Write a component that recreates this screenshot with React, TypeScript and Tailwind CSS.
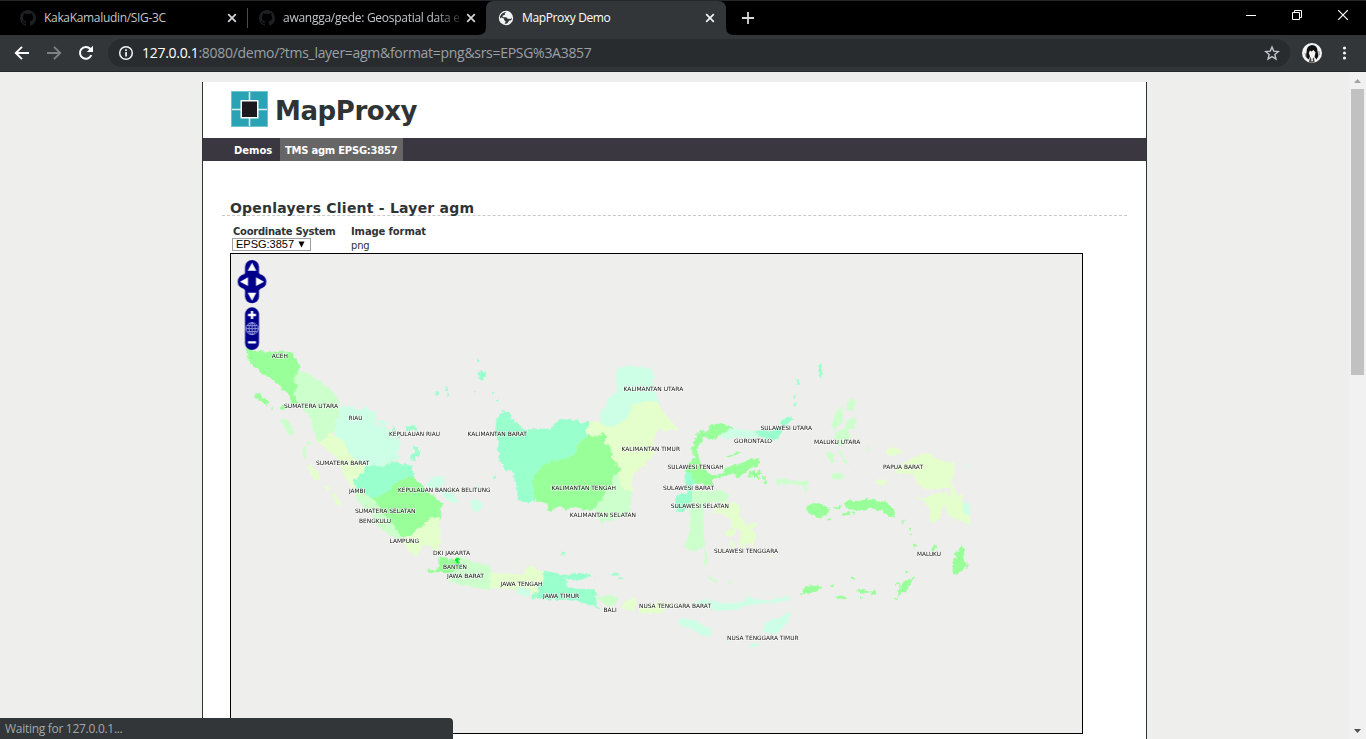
import React from "react";

const G = "#99ff99";
const PG = "#ccffcc";
const A = "#99ffcc";
const PA = "#ccffe5";
const Y = "#e5ffcc";

type Shape = [string, string];
type Region = { x: number; y: number; shapes: Shape[] };

const regions: Region[] = [
  {
    x: 230,
    y: 340,
    shapes: [
      [PG, "M205,92 L240,103 L275,130 L305,150 L325,180 L330,225 L315,240 L318,275 L300,278 L285,298 L262,305 L250,270 L243,235 L225,215 L200,185 L190,165 L200,140 L190,118Z"],
      [G, "M48,25 L80,32 L120,38 L150,33 L180,38 L195,50 L200,68 L213,78 L205,88 L190,118 L200,140 L190,165 L205,185 L186,190 L178,165 L155,145 L130,118 L110,110 L75,82 L55,60Z"],
      [PA, "M335,198 L350,205 L360,196 L380,210 L410,203 L420,222 L440,240 L430,252 L470,265 L478,285 L495,295 L513,315 L500,340 L510,355 L485,365 L460,382 L435,375 L408,378 L380,360 L350,335 L345,310 L318,290 L315,245 L330,225Z"],
      [PA, "M415,212 L440,215 L442,235 L425,225Z M445,240 L470,245 L473,258 L450,255Z M476,270 L500,275 L505,292 L485,288Z"],
      [Y, "M262,305 L285,298 L300,278 L318,290 L345,310 L350,335 L380,360 L408,378 L405,400 L372,415 L370,445 L350,415 L335,385 L320,350 L300,335Z"],
      [A, "M408,378 L435,375 L460,382 L485,365 L520,372 L548,380 L550,412 L500,427 L480,452 L450,470 L420,472 L385,455 L370,425 L385,408 L405,400Z"],
      [PG, "M372,445 L385,455 L420,470 L450,500 L465,530 L490,555 L517,586 L512,598 L480,585 L440,555 L425,520 L400,500 L380,470Z"],
      [G, "M550,410 L575,435 L590,455 L610,468 L640,490 L630,515 L635,540 L600,545 L570,562 L547,580 L540,592 L515,590 L490,555 L465,530 L450,500 L425,475 L450,468 L480,450 L500,425Z"],
      [Y, "M555,570 L580,558 L600,535 L628,534 L631,610 L625,636 L600,620 L576,615 L560,648 L535,630 L515,602 L545,587Z"],
      [G, "M73,162 L85,160 L115,186 L110,194 L80,174Z M121,205 h6 v4 h-6Z M150,200 l14,-4 l4,8 l-12,6Z M180,185 l22,-4 l2,8 l-20,4Z"],
      [PG, "M152,240 L165,236 L185,260 L193,278 L188,290 L175,278 L160,258Z M218,322 l8,-2 l2,32 l-8,-6Z M230,312 l12,-4 l-3,8Z"],
      [Y, "M235,375 L248,378 L262,398 L270,418 L258,421 L243,402 L233,388Z M282,436 l14,6 l3,12 l-12,-6Z M307,457 L320,468 L336,503 L325,494 L310,474Z"],
      [A, "M528,262 l18,-7 l14,6 l2,12 l-14,-3 l-16,3Z M553,318 l8,3 l-2,12 l16,3 l-6,10 l-10,0 l-4,14 l-14,-3 l2,-12 l10,-6Z M617,155 h9 v10 h-9Z M646,138 h6 v8 h-6Z M643,148 h8 v4 h-8Z M505,290 h7 v5 h-7Z M490,257 l6,14 l-6,-2Z M652,160 h4 v8 h-4Z"],
      [PA, "M588,432 L608,412 L640,410 L642,430 L628,448 L610,446Z M630,452 L660,450 L678,472 L668,486 L645,475Z M668,480 l16,2 v6 h-16Z M735,440 l15,2 l-8,10Z"],
      [PA, "M719,484 L735,480 L760,490 L758,505 L745,517 L730,510Z"],
    ],
  },
  {
    x: 400,
    y: 520,
    shapes: [
      [PG, "M173,112 L200,118 L230,128 L260,134 L275,155 L268,178 L272,205 L265,211 L230,203 L190,195 L150,185 L148,165 L175,145Z"],
      [G, "M120,110 L140,115 L165,120 L180,130 L200,140 L165,150 L150,160 L125,155 L100,158 L88,158 L80,148 L100,152 L115,140Z"],
      ["#00ef25", "M163,117 L180,118 L177,128 L168,130Z"],
      [Y, "M272,155 L310,160 L340,160 L370,165 L380,140 L400,137 L408,152 L432,150 L430,185 L412,195 L408,225 L385,215 L350,212 L310,205 L272,205Z"],
      [PA, "M352,202 L385,204 L390,230 L370,226 L350,215Z"],
      [A, "M432,153 L462,158 L478,162 L498,165 L500,200 L530,208 L585,205 L588,250 L597,264 L570,255 L535,243 L500,240 L450,238 L395,234 L400,220 L415,215 L413,195 L430,185Z M495,166 L520,160 L565,162 L570,170 L540,180 L505,178Z M485,98 l8,-2 l2,8 l-8,2Z M630,161 l18,-3 l8,8 l-14,0Z M656,172 l12,2 v5 l-12,-3Z M584,170 h4 v4 h-4Z"],
      [PG, "M588,233 L615,230 L640,226 L656,238 L640,256 L620,260 L608,243Z"],
      [Y, "M665,262 L682,240 L705,235 L712,245 L698,272 L680,266Z M714,278 L724,260 L740,262 L758,248 L775,248 L795,245 L820,256 L832,250 L838,258 L800,262 L790,275 L755,280Z"],
    ],
  },
  {
    x: 460,
    y: 350,
    shapes: [
      [PA, "M475,54 L500,50 L540,52 L572,58 L580,72 L578,110 L590,140 L598,160 L560,152 L520,165 L500,205 L465,230 L420,225 L425,185 L450,145 L475,120 L470,90Z"],
      [A, "M132,182 L145,190 L155,208 L178,228 L195,243 L230,237 L270,237 L300,208 L330,210 L355,213 L362,222 L390,212 L395,225 L380,235 L382,255 L350,285 L350,308 L320,328 L280,332 L250,350 L220,375 L225,450 L205,458 L175,450 L170,400 L155,358 L118,330 L115,270 L106,250 L110,205Z M125,332 l18,6 l8,20 l-15,6 l-5,-15Z M100,377 h9 v8 h-9Z M55,70 L65,62 L75,70 L72,88 L62,92Z M97,127 h8 v6 h-8Z M108,150 h7 v4 h-7Z M53,30 h4 v4 h-4Z M42,125 h4 v4 h-4Z"],
      [Y, "M382,235 L392,213 L410,212 L430,225 L465,230 L500,205 L520,165 L560,152 L590,158 L605,180 L625,205 L655,240 L590,240 L580,275 L583,310 L550,350 L520,370 L512,400 L522,425 L480,420 L478,370 L460,335 L455,300 L435,292 L440,260 L415,258 L400,262 L382,250Z"],
      [G, "M352,285 L382,256 L400,262 L415,258 L430,250 L440,260 L430,282 L450,290 L458,330 L480,355 L475,372 L458,378 L460,405 L440,420 L415,470 L385,482 L345,470 L320,478 L300,468 L268,487 L262,460 L230,452 L220,430 L218,378 L250,350 L280,332 L320,328 L350,308Z"],
      [PG, "M458,378 L475,372 L480,400 L490,420 L517,425 L512,455 L508,490 L480,500 L425,520 L405,480 L430,440 L460,405Z"],
    ],
  },
  {
    x: 660,
    y: 350,
    shapes: [
      [G, "M155,222 L190,222 L222,235 L210,243 L180,252 L170,268 L135,262 L120,275 L110,300 L118,330 L125,350 L140,365 L160,378 L190,370 L195,355 L225,345 L250,338 L275,325 L298,330 L297,345 L270,355 L240,380 L215,372 L190,378 L160,385 L155,405 L130,402 L100,400 L80,362 L95,330 L105,320 L92,295 L103,285 L110,250 L130,240 L135,252 L148,238Z"],
      [G, "M200,320 l15,-5 l3,4 l-14,5Z M220,310 l15,-4 l6,3 l-16,6Z M265,370 l15,-8 l8,8 l10,-8 l8,10 l-14,4 l12,10 l-10,0 l-16,-12 l-12,6Z M310,380 h6 v8 h-6Z M312,395 h8 v6 h-8Z"],
      [PA, "M180,252 L215,238 L260,240 L290,245 L300,260 L270,265 L230,262 L195,266Z"],
      [A, "M285,245 L310,240 L330,245 L352,235 L370,225 L360,220 L375,205 L390,198 L397,208 L375,230 L362,245 L355,265 L330,270 L305,262Z M477,44 L487,46 L485,62 L488,72 L480,84 L476,70Z M408,88 L415,90 L419,103 L411,104Z M404,137 h5 v8 h-5Z M404,158 h5 v7 h-5Z"],
      [A, "M78,362 L92,372 L104,395 L95,410 L98,445 L85,470 L72,485 L50,485 L50,470 L45,445 L65,430 L82,430 L72,395Z"],
      [PG, "M98,420 L150,425 L180,420 L208,435 L200,455 L160,455 L130,470 L130,520 L132,590 L115,598 L100,605 L75,592 L88,550 L92,500 L85,470 L98,445Z M134,600 L140,615 L138,648 L134,640Z M143,678 l12,5 l18,10 l-4,4 l-20,-8Z"],
      [Y, "M165,465 L195,452 L235,462 L240,480 L235,500 L255,515 L262,530 L283,513 L290,525 L272,540 L288,550 L284,575 L274,592 L262,575 L250,597 L238,582 L243,545 L228,535 L225,557 L200,557 L192,545 L220,540 L208,500 L185,490 L160,490Z M208,572 l12,5 v14 l-10,-4Z M328,615 h5 v5 h-5Z"],
      [PG, "M560,160 L575,146 L587,155 L578,180 L562,175Z M548,172 L545,185 L548,210 L535,230 L522,240 L515,218 L528,188Z M560,212 L587,205 L585,235 L560,240 L575,262 L560,270 L545,290 L535,285 L525,262 L528,250 L555,235Z M500,305 L520,310 L525,335 L515,338 L502,325Z M535,298 L545,310 L555,330 L565,345 L550,335Z M517,368 L540,370 L555,380 L545,388 L518,386Z"],
      [PG, "M350,386 L380,388 L400,395 L445,392 L452,400 L435,405 L441,420 L436,426 L430,405 L380,400 L350,403Z"],
      [G, "M440,468 L460,460 L485,462 L506,475 L506,490 L480,502 L455,495 L440,480Z M555,460 L570,450 L595,455 L620,448 L640,450 L680,458 L700,480 L702,502 L685,495 L660,480 L635,475 L600,480 L565,477Z M545,490 l20,-5 l8,8 l-24,4Z M520,475 l22,-8 l6,4 l-20,8Z M575,485 l12,3 l-4,6Z M502,508 h9 v5 h-9Z"],
      [G, "M430,718 L445,710 L475,708 L485,715 L460,728 L420,731 L428,725Z M576,682 h8 v6 h-8Z M512,706 h5 v4 h-5Z M591,722 l14,-3 l22,6 l-4,4 l-24,-3Z"],
      [Y, "M675,300 l25,-7 l18,3 l-3,16 l-18,3Z M645,395 L665,387 L678,398 L660,405Z"],
      [PG, "M621,292 l10,6 l-3,3Z"],
    ],
  },
  {
    x: 860,
    y: 430,
    shapes: [
      [Y, "M72,60 L95,62 L105,55 L125,65 L115,75 L80,75Z M140,97 L160,82 L195,72 L225,80 L245,95 L278,97 L285,130 L272,160 L290,190 L310,220 L315,245 L330,255 L328,285 L310,270 L285,268 L262,252 L258,215 L275,185 L265,172 L225,178 L190,174 L172,160 L160,130 L130,130 L105,132 L110,110Z M168,202 L200,205 L215,192 L240,190 L262,185 L262,215 L245,230 L242,260 L225,276 L208,270 L212,238 L190,212Z M45,155 l15,-8 l18,6 l-5,11 l-18,-2Z M302,190 l5,5 l-2,14 l-4,-8Z"],
      [PA, "M312,213 L324,222 L329,245 L328,255 L310,248Z M318,107 l8,0 l-2,8Z M325,283 l5,-5 v12Z"],
      [G, "M305,347 L313,360 L310,385 L318,402 L308,420 L290,430 L278,428 L280,395 L288,380 L283,367 L298,365Z M320,400 l5,3 l-4,14Z M222,345 L229,343 L226,360 L215,362Z M103,508 L120,495 L112,485 L130,455 L150,450 L163,440 L160,450 L148,460 L140,480 L120,492 L108,507Z M105,463 l16,-4 l-2,6Z M30,486 L45,482 L48,490 L35,494Z M124,272 l9,0 l-4,9Z M145,297 h5 v4 h-5Z M149,312 h5 v4 h-5Z M163,345 h4 v4 h-4Z M137,423 h6 v5 h-6Z M0,501 h5 v4 h-5Z"],
    ],
  },
  {
    x: 610,
    y: 550,
    shapes: [
      [PA, "M250,158 L290,148 L320,155 L345,162 L385,160 L405,150 L415,138 L425,150 L455,148 L475,155 L495,146 L540,140 L543,150 L515,155 L480,158 L450,160 L415,165 L370,178 L320,182 L290,168 L255,165Z M205,212 L225,205 L260,212 L278,228 L303,238 L305,252 L285,259 L262,245 L240,232 L210,225Z M465,220 L490,208 L510,205 L530,188 L545,187 L535,215 L505,245 L490,250 L462,245Z M415,292 L435,278 L455,275 L430,292Z M345,272 h8 v4 h-8Z"],
      [PG, "M287,10 l4,8 l-1,30 l-4,-8Z M294,78 l10,3 l12,10 l-8,2Z M356,96 h7 v4 h-7Z"],
      [G, "M675,140 l18,-3 l18,7 l-2,4 l-18,-3Z"],
    ],
  },
];

const labels: [string, number, number, number][] = [
  ["ACEH", 271.7, 288, 356.5],
  ["SUMATERA UTARA", 284, 338, 406],
  ["RIAU", 348.5, 362.5, 418],
  ["KEPULAUAN RIAU", 389, 440, 434],
  ["SUMATERA BARAT", 316, 369.5, 463],
  ["JAMBI", 349, 365.3, 491.5],
  ["KEPULAUAN BANGKA BELITUNG", 398, 490.5, 490.3],
  ["SUMATERA SELATAN", 355, 415.5, 511.5],
  ["BENGKULU", 359, 391, 521.5],
  ["LAMPUNG", 389.5, 419, 541.5],
  ["DKI JAKARTA", 433, 470, 553],
  ["BANTEN", 443, 467, 567],
  ["JAWA BARAT", 447, 484, 576],
  ["JAWA TENGAH", 500.5, 542.5, 584],
  ["JAWA TIMUR", 543, 579.3, 596],
  ["BALI", 603.5, 616.7, 610],
  ["NUSA TENGGARA BARAT", 639, 711, 606],
  ["NUSA TENGGARA TIMUR", 727, 798.5, 638.5],
  ["KALIMANTAN UTARA", 623.5, 683.3, 389.5],
  ["KALIMANTAN BARAT", 467.5, 527, 434.5],
  ["KALIMANTAN TIMUR", 621.5, 680, 449.5],
  ["KALIMANTAN TENGAH", 551.5, 616, 488.5],
  ["KALIMANTAN SELATAN", 569.7, 636, 515.3],
  ["SULAWESI TENGAH", 667.5, 723.5, 467.5],
  ["SULAWESI BARAT", 663, 714, 488.5],
  ["SULAWESI SELATAN", 670.7, 729, 506],
  ["SULAWESI UTARA", 760.5, 812, 428.5],
  ["GORONTALO", 734, 772, 441],
  ["MALUKU UTARA", 814, 860.3, 442],
  ["SULAWESI TENGGARA", 714, 778, 550.7],
  ["PAPUA BARAT", 883, 923, 467.5],
  ["MALUKU", 917, 941, 554],
];

function PanZoom() {
  return (
    <g transform="translate(225 225) scale(0.33333)">
      <rect x="60" y="105" width="42" height="130" rx="21" fill="#00008b" />
      <rect x="38" y="148" width="86" height="44" rx="22" fill="#00008b" />
      <rect x="56" y="144" width="50" height="52" rx="8" fill="#00008b" />
      <path d="M81 113 L94 137 H68Z M81 227 L94 203 H68Z M45 170 L69 157 V183Z M117 170 L93 157 V183Z" fill="#fff" />
      <rect x="60" y="247" width="42" height="128" rx="21" fill="#00008b" />
      <path d="M77.500 258 h7 v8.500 h8.500 v7 h-8.500 v8.500 h-7 v-8.500 h-8.500 v-7 h8.500Z M69 348.500 h24 v7 h-24Z" fill="#fff" />
      <g fill="none" stroke="#aab0e4" strokeWidth="2.500">
        <circle cx="81" cy="311" r="18" />
        <ellipse cx="81" cy="311" rx="9" ry="18" />
        <path d="M81 293 V329 M63 311 H99 M66 302 H96 M66 320 H96" />
      </g>
    </g>
  );
}

function MapCanvas() {
  return (
    <svg className="block h-[479px] w-[851px]" viewBox="231 254 851 479">
      <defs>
        <filter id="coast" x="231" y="254" width="851" height="479" filterUnits="userSpaceOnUse" colorInterpolationFilters="sRGB">
          <feTurbulence type="fractalNoise" baseFrequency="0.25" numOctaves={2} seed={4} result="n" />
          <feDisplacementMap in="SourceGraphic" in2="n" scale={5} xChannelSelector="R" yChannelSelector="G" />
        </filter>
      </defs>
      <g filter="url(#coast)">
        {regions.map((r, i) => (
          <g key={i} transform={`translate(${r.x} ${r.y}) scale(0.33333)`}>
            {r.shapes.map(([fill, d], j) => (
              <path key={j} d={d} fill={fill} stroke={fill} strokeWidth="1.5" />
            ))}
          </g>
        ))}
      </g>
      <g
        fontFamily="'DejaVu Sans', sans-serif"
        fontSize="5.9"
        fill="#111"
        stroke="#fff"
        strokeOpacity="0.75"
        strokeWidth="1.2"
        paintOrder="stroke"
      >
        {labels.map(([t, a, b, cy]) => (
          <text key={t} x={a} y={cy + 1.8} textLength={b - a} lengthAdjust="spacingAndGlyphs">
            {t}
          </text>
        ))}
      </g>
      <PanZoom />
    </svg>
  );
}

function CloseX({ color }: { color: string }) {
  return (
    <svg className="size-[10px] shrink-0" viewBox="0 0 10 10">
      <path d="M1.200 1.200 L8.800 8.800 M8.800 1.200 L1.200 8.800" stroke={color} strokeWidth="1.7" />
    </svg>
  );
}

function GitHubMark() {
  return (
    <svg className="size-4 shrink-0" viewBox="0 0 16 16" fill="#1d2023">
      <path d="M8 0C3.580 0 0 3.580 0 8c0 3.540 2.290 6.530 5.470 7.590.4.070.55-.17.55-.38 0-.19-.01-.82-.01-1.490-2.010.37-2.530-.49-2.690-.94-.09-.23-.48-.94-.82-1.130-.28-.15-.68-.52-.01-.53.63-.01 1.080.58 1.230.82.72 1.210 1.870.87 2.330.66.070-.52.28-.87.51-1.070-1.780-.2-3.640-.89-3.640-3.950 0-.87.31-1.590.82-2.150-.08-.2-.36-1.020.08-2.120 0 0 .67-.21 2.200.82.64-.18 1.320-.27 2-.27s1.360.09 2 .27c1.530-1.040 2.200-.82 2.200-.82.44 1.100.16 1.920.08 2.120.51.56.82 1.270.82 2.150 0 3.070-1.870 3.750-3.650 3.950.29.25.54.73.54 1.480 0 1.070-.01 1.930-.01 2.200 0 .21.15.46.55.38A8.010 8.010 0 0 0 16 8c0-4.420-3.580-8-8-8z" />
    </svg>
  );
}

function TabStrip() {
  return (
    <div className="flex h-[35px] items-stretch border-t border-[#242628] bg-black text-[12px] text-[#c3c6ca]">
      <div className="flex w-[247px] items-center pl-5">
        <GitHubMark />
        <span className="ml-2 w-[183px] whitespace-nowrap tracking-[-0.32px]">KakaKamaludin/SIG-3C</span>
        <CloseX color="#d5d7da" />
      </div>
      <div className="my-[7px] w-px bg-[#4a4c4f]" />
      <div className="flex w-[238px] items-center pl-[11px]">
        <GitHubMark />
        <span className="ml-2 w-[177px] whitespace-nowrap tracking-[-0.27px] [mask-image:linear-gradient(to_right,black_86%,transparent_103%)]">
          awangga/gede: Geospatial data e
        </span>
        <div className="ml-[6px]">
          <CloseX color="#d5d7da" />
        </div>
      </div>
      <svg className="h-full w-[8px] overflow-visible" viewBox="0 0 8 34">
        <path d="M-8 34 Q0 34 0 26 V8 Q0 0 8 0 V34Z" fill="#323639" />
      </svg>
      <div className="flex w-[224px] items-center bg-[#323639] pl-[4px] text-white">
        <svg className="size-[16px] shrink-0" viewBox="0 0 16 16">
          <circle cx="8" cy="8" r="7.200" fill="#f1f3f4" />
          <path d="M8.500 2.200 L6.800 3.200 L7 4.800 L4.800 5.600 L4.600 7.200 L8.200 7.200 L9.800 8.800 L12.500 9 L13.800 7.500 L13.500 10 L11 10.800 L9.200 13.500 L6.500 13.800 L7.800 11.800 L6.300 10.300 L5.800 8.600 L2.200 8.300 L2 6.500 L3.800 3.800 L6.500 2.200Z" fill="#323639" />
          <path d="M3 7.200 L5.500 8.800 L5 11 L3 10Z M10 3 L12.500 5 L11 6.800 L8.500 5.500Z" fill="#f1f3f4" />
        </svg>
        <span className="ml-2 w-[183px] whitespace-nowrap tracking-[-0.38px]">MapProxy Demo</span>
        <CloseX color="#f1f3f4" />
      </div>
      <svg className="h-full w-[16px]" viewBox="0 0 16 34">
        <path d="M0 0 Q8 0 8 8 V26 Q8 34 16 34 H0Z" fill="#323639" />
      </svg>
      <div className="flex flex-1 items-center pl-[8px]">
        <svg className="size-3" viewBox="0 0 12 12">
          <path d="M6 0 V12 M0 6 H12" stroke="#d5d7da" strokeWidth="1.800" />
        </svg>
      </div>
      <div className="flex items-start gap-[36px] pr-[18px] pt-[9px]">
        <svg className="size-[10px]" viewBox="0 0 10 10">
          <path d="M0 5.500 H10" stroke="#fff" />
        </svg>
        <svg className="size-[10px] overflow-visible" viewBox="0 0 10 10">
          <path d="M0.500 2.500 H7.500 V9.500 H0.500Z M2.500 2.500 V0.500 H9.500 V7.500 H7.500" stroke="#fff" fill="none" />
        </svg>
        <svg className="size-[10px]" viewBox="0 0 10 10">
          <path d="M0 0 L10 10 M10 0 L0 10" stroke="#fff" strokeWidth="1.200" />
        </svg>
      </div>
    </div>
  );
}

function Toolbar() {
  return (
    <div className="flex h-[37px] items-center border-b border-[#26282a] bg-[#323639]">
      <svg className="ml-[14px] size-4" viewBox="0 0 16 16" fill="none" stroke="#fff" strokeWidth="1.900">
        <path d="M15 8 H2 M8 1.800 L1.800 8 L8 14.200" />
      </svg>
      <svg className="ml-4 size-4" viewBox="0 0 16 16" fill="none" stroke="#7f8285" strokeWidth="1.900">
        <path d="M1 8 H14 M8 1.800 L14.200 8 L8 14.200" />
      </svg>
      <svg className="ml-4 size-4" viewBox="0 0 16 16">
        <path d="M13.300 10.200 A5.900 5.900 0 1 1 12.200 3.800 L13.500 5.200" fill="none" stroke="#fff" strokeWidth="2" />
        <path d="M15 0.800 V7 H8.800Z" fill="#fff" />
      </svg>
      <div className="ml-[14px] flex h-7 w-[1182px] items-center rounded-full bg-[#292c2f] pl-[10px] pr-[10px]">
        <svg className="size-4" viewBox="0 0 16 16">
          <circle cx="8" cy="8" r="6.300" fill="none" stroke="#f1f3f4" strokeWidth="1.500" />
          <path d="M7.200 7 h1.700 v4.600 h-1.700Z M7.200 4.300 h1.700 v1.700 h-1.700Z" fill="#f1f3f4" />
        </svg>
        <span className="mb-px ml-2 flex-1 whitespace-nowrap text-[14px] tracking-[-0.29px] text-[#9aa0a6]">
          <span className="text-white">127.0.0.1</span>:8080/demo/?tms_layer=agm&amp;format=png&amp;srs=EPSG%3A3857
        </span>
        <svg className="size-4" viewBox="0 0 24 24">
          <path d="M12 3 L14.600 9.200 L21.500 9.800 L16.300 14.300 L17.900 21 L12 17.400 L6.100 21 L7.700 14.300 L2.500 9.800 L9.400 9.200Z" fill="none" stroke="#c3c6ca" strokeWidth="2.100" />
        </svg>
      </div>
      <svg className="ml-3 size-5" viewBox="0 0 20 20">
        <circle cx="10" cy="10" r="10" fill="#f4f4f4" />
        <path d="M4.500 9 Q4.500 2.500 10 2 Q15.500 2.300 15.500 8 L16.500 13 L14.500 16.500 L12.500 14 L13.500 9.500 L11.500 7 L9.500 8.500 L8 7.500 L6.800 10 L8 13.500 L6.500 16.500 L4 14Z" fill="#111" />
        <path d="M8 14 L10 16 L12 14.500 L12.500 19 L10 19.800 L7 19Z" fill="#444" />
        <path d="M9.200 15 L10.300 14.200 L11 18 L9.500 18.500Z" fill="#f4f4f4" />
        <path d="M3 10 l1 4 M16.800 8 l0.500 4" stroke="#888" strokeWidth="1" />
      </svg>
      <svg className="ml-[15px] h-4 w-4" viewBox="0 0 16 16" fill="#f1f3f4">
        <circle cx="7.500" cy="3" r="1.600" />
        <circle cx="7.500" cy="8" r="1.600" />
        <circle cx="7.500" cy="13" r="1.600" />
      </svg>
    </div>
  );
}

function Scrollbar() {
  return (
    <div className="flex w-[17px] flex-col items-center bg-[#f1f1f1]">
      <svg className="h-[17px] w-[17px]" viewBox="0 0 17 17">
        <path d="M5 11 L8.500 7 L12 11Z" fill="#a3a3a3" />
      </svg>
      <div className="h-[286px] w-[13px] bg-[#c1c1c1]" />
      <div className="flex-1" />
      <svg className="h-[17px] w-[17px]" viewBox="0 0 17 17">
        <path d="M5 7 L8.500 11 L12 7Z" fill="#505050" />
      </svg>
    </div>
  );
}

function Logo() {
  return (
    <svg className="h-[36px] w-[37px]" viewBox="0 0 37 36">
      <rect width="37" height="36" fill="#2aa3b5" />
      <path d="M18.500 0 V36 M0 18.500 H37" stroke="#d9f0f3" strokeWidth="1.600" />
      <rect x="9.500" y="9" width="18" height="18.500" fill="#fff" />
      <rect x="11" y="10.500" width="15" height="15.500" fill="#1c1a1e" />
      <rect x="0.500" y="0.500" width="36" height="35" fill="none" stroke="#6fc3cf" />
    </svg>
  );
}

export default function App() {
  return (
    <div className="relative flex h-[739px] w-[1366px] flex-col overflow-hidden bg-[#eeeeec] font-['Open_Sans',sans-serif]">
      <TabStrip />
      <Toolbar />
      <div className="flex min-h-0 flex-1">
        <div className="flex-1 overflow-hidden pl-[202px] pt-[10px] font-['DejaVu_Sans',Verdana,sans-serif] text-[#2e3436]">
          <div className="h-[700px] w-[945px] border-x border-[#2e3436] bg-white">
            <div className="flex h-[56px] items-start pl-7 pt-[9px]">
              <Logo />
              <div className="ml-[7px] mt-[3px] whitespace-nowrap text-[26px] leading-[34px] font-bold tracking-[-0.42px]">MapProxy</div>
            </div>
            <div className="flex h-[23px] bg-[#3a3741] pl-[26px] text-[10px] leading-[25px] font-bold whitespace-nowrap text-white">
              <div className="w-[51px] pl-[5px]">Demos</div>
              <div className="w-[123px] bg-[#666666] pl-[5px] tracking-[-0.25px]">TMS agm EPSG:3857</div>
            </div>
            <div className="ml-[19px] mt-[38px] h-[17px] w-[905px] border-b border-dashed border-[#c8c8c8] pl-[8px] text-[14px] leading-[19px] font-bold tracking-[0.22px] whitespace-nowrap">
              Openlayers Client - Layer agm
            </div>
            <div className="mt-[9px] flex h-[28px] pl-[29px] text-[10px] leading-[13px] whitespace-nowrap">
              <div className="w-[119px]">
                <div className="pl-px font-bold tracking-[-0.28px]">Coordinate System</div>
                <div className="flex h-[13px] w-[79px] items-center border border-[#a0a0a0] bg-white pl-[3px] font-['Liberation_Sans',sans-serif] text-[11px] leading-[11px] text-black">
                  <span className="w-[62px]">EPSG:3857</span>
                  <svg className="h-[7px] w-[7px]" viewBox="0 0 7 7">
                    <path d="M0.500 0.500 H6.500 L3.500 6.500Z" fill="#000" />
                  </svg>
                </div>
              </div>
              <div>
                <div className="font-bold tracking-[-0.12px]">Image format</div>
                <div className="leading-[15px] tracking-[-0.2px]">png</div>
              </div>
            </div>
            <div className="ml-[27px] h-[481px] w-[853px] border border-black bg-[#eeeeec]">
              <MapCanvas />
            </div>
          </div>
        </div>
        <Scrollbar />
      </div>
      <div className="absolute bottom-0 left-0 flex h-[21px] w-[453px] items-center rounded-tr bg-[#323639] pl-[5px] text-[12px] tracking-[-0.29px] text-[#a3a8ad]">
        Waiting for 127.0.0.1...
      </div>
    </div>
  );
}
